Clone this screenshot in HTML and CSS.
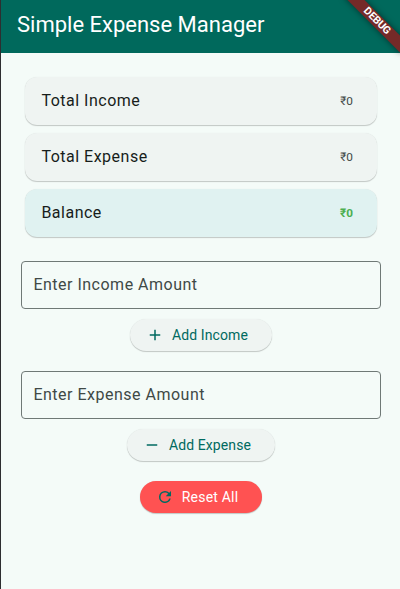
FILE: index.html
```html
<!DOCTYPE html>
<html lang="en">
<head>
<meta charset="utf-8">
<title>Simple Expense Manager</title>
<link rel="stylesheet" href="styles.css">
</head>
<body>
<div class="app">
  <header class="app-bar"><h1>Simple Expense Manager</h1></header>
  <div class="banner">DEBUG</div>
  <main class="content">
    <section class="summary">
      <div class="card"><span>Total Income</span><span class="amount">₹0</span></div>
      <div class="card"><span>Total Expense</span><span class="amount">₹0</span></div>
      <div class="card balance"><span>Balance</span><span class="amount">₹0</span></div>
    </section>
    <div class="field">Enter Income Amount</div>
    <button class="btn">
      <svg viewBox="0 0 24 24"><path d="M19 13h-6v6h-2v-6H5v-2h6V5h2v6h6v2z"/></svg>
      <span>Add Income</span>
    </button>
    <div class="field">Enter Expense Amount</div>
    <button class="btn">
      <svg viewBox="0 0 24 24"><path d="M19 13H5v-2h14v2z"/></svg>
      <span>Add Expense</span>
    </button>
    <button class="btn reset">
      <svg viewBox="0 0 24 24"><path d="M17.65 6.35A7.96 7.96 0 0 0 12 4a8 8 0 1 0 7.73 10h-2.08A6 6 0 1 1 12 6c1.66 0 3.14.69 4.22 1.78L13 11h7V4l-2.35 2.35z"/></svg>
      <span>Reset All</span>
    </button>
  </main>
</div>
</body>
</html>
```
FILE: styles.css
```css
* {
  box-sizing: border-box;
}

html,
body {
  height: 100%;
  margin: 0;
  overflow: hidden;
}

body {
  font-family: Roboto, "Liberation Sans", sans-serif;
  background: #f4fbf8;
}

.app {
  position: relative;
  width: 401px;
  height: 100%;
  border-left: 1px solid #2d2e30;
}

.app-bar {
  height: 53px;
  padding: 0 16px 3px;
  display: flex;
  align-items: center;
  background: #00695c;
  color: #fff;
}

.app-bar h1 {
  margin: 0;
  font-size: 22px;
  line-height: 28px;
  font-weight: 400;
}

.banner {
  position: absolute;
  left: 336px;
  top: 15px;
  width: 80px;
  height: 12px;
  transform: rotate(45deg);
  background: #752a28;
  box-shadow: 0 0 6px rgba(0, 0, 0, 0.5);
  color: #fff;
  font-size: 10.6px;
  line-height: 12px;
  font-weight: 700;
  letter-spacing: -0.1px;
  text-align: center;
}

.content {
  display: flex;
  flex-direction: column;
  align-items: center;
  padding: 24px 20px 0;
}

.summary {
  align-self: stretch;
  display: flex;
  flex-direction: column;
  gap: 8px;
  padding: 0 4px;
  margin-bottom: 24px;
}

.card {
  height: 48px;
  padding: 0 24px 1px 16.4px;
  display: flex;
  align-items: center;
  justify-content: space-between;
  border-radius: 12px;
  background: #eff4f2;
  color: #171d1b;
  font-size: 16px;
  letter-spacing: 0.5px;
  box-shadow: 0 1px 1px rgba(0, 0, 0, 0.2), 0 0 1px rgba(0, 0, 0, 0.1);
}

.amount {
  font-size: 11.8px;
  line-height: 16px;
  letter-spacing: 0;
  color: #3f4946;
}

.balance {
  background: #e0f2f1;
}

.balance .amount {
  color: #4caf50;
  font-weight: 700;
}

.field {
  align-self: stretch;
  height: 48px;
  padding: 0 11.4px 1px;
  display: flex;
  align-items: center;
  border: 1px solid #6f7976;
  border-radius: 4px;
  color: #3f4946;
  font-size: 16px;
  letter-spacing: 0.5px;
}

.btn {
  height: 32px;
  margin: 10px 0 20px;
  padding: 0 24px 0 16px;
  display: flex;
  align-items: center;
  gap: 8px;
  border: 0;
  border-radius: 16px;
  background: #eff4f2;
  color: #006a60;
  font: 400 14px/20px Roboto, "Liberation Sans", sans-serif;
  letter-spacing: 0.1px;
  white-space: nowrap;
  box-shadow: 0 1px 1px rgba(0, 0, 0, 0.2), 0 0 1px rgba(0, 0, 0, 0.1);
}

.btn svg {
  width: 18px;
  height: 18px;
  fill: #006a60;
}

.reset {
  margin-top: 0;
  background: #ff5252;
  color: #fff;
  letter-spacing: 0.2px;
}
```
